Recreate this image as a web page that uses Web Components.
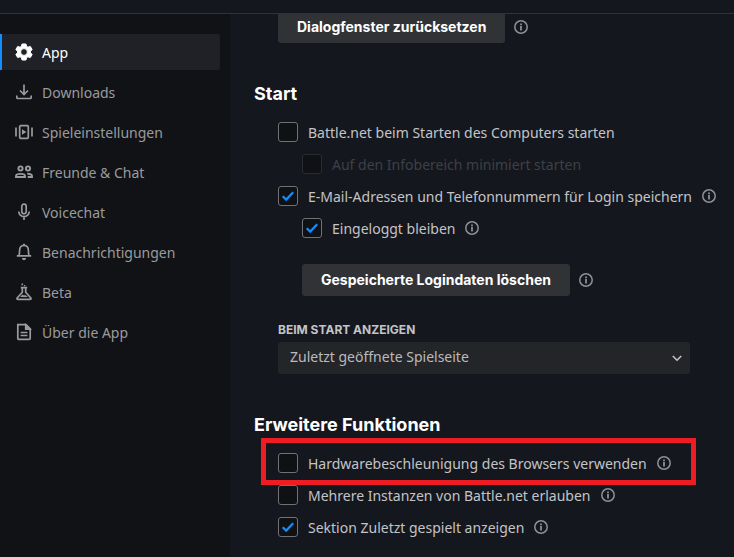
<!DOCTYPE html>
<html lang="de">
<head>
<meta charset="utf-8">
<meta name="viewport" content="width=device-width, initial-scale=1">
<title>Einstellungen</title>
<style>
body {
  margin: 0;
  background: #15171e;
  color: #c3c4c6;
  font: 14px/20px "Noto Sans", "Liberation Sans", sans-serif;
}
</style>
</head>
<body>

<settings-window>
  <nav-item slot="nav" icon="gear" active>App</nav-item>
  <nav-item slot="nav" icon="download">Downloads</nav-item>
  <nav-item slot="nav" icon="game">Spieleinstellungen</nav-item>
  <nav-item slot="nav" icon="friends">Freunde &amp; Chat</nav-item>
  <nav-item slot="nav" icon="mic">Voicechat</nav-item>
  <nav-item slot="nav" icon="bell">Benachrichtigungen</nav-item>
  <nav-item slot="nav" icon="flask">Beta</nav-item>
  <nav-item slot="nav" icon="doc">Über die App</nav-item>

  <action-row info>Dialogfenster zurücksetzen</action-row>

  <settings-section heading="Start">
    <check-row>Battle.net beim Starten des Computers starten</check-row>
    <check-row nested disabled>Auf den Infobereich minimiert starten</check-row>
    <check-row checked info>E-Mail-Adressen und Telefonnummern für Login speichern</check-row>
    <check-row nested checked info>Eingeloggt bleiben</check-row>
    <action-row nested info>Gespeicherte Logindaten löschen</action-row>
    <select-field label="Beim Start anzeigen" options="Zuletzt geöffnete Spielseite"></select-field>
  </settings-section>

  <settings-section heading="Erweitere Funktionen">
    <check-row info marked>Hardwarebeschleunigung des Browsers verwenden</check-row>
    <check-row info>Mehrere Instanzen von Battle.net erlauben</check-row>
    <check-row checked info>Sektion Zuletzt gespielt anzeigen</check-row>
  </settings-section>
</settings-window>

<script>
// every icon is drawn on an 18x18 grid
const ICONS = {
  gear: `<path fill="currentColor" fill-rule="evenodd" stroke="currentColor" stroke-width="1" stroke-linejoin="round" d="M7 1h4l.5 2.300 1.500.9 2.300-.8 1.900 3.200L15.500 8.200v1.600l1.700 1.600-1.900 3.200-2.300-.8-1.500.9L11 17H7l-.5-2.300-1.500-.9-2.300.8-1.900-3.200 1.700-1.600V8.200L.8 6.600l1.900-3.200 2.300.8 1.500-.9zM9 5.600a3.400 3.400 0 1 0 0 6.800 3.400 3.400 0 0 0 0-6.800z"/>`,
  download: `<path d="M9 1.500v9.500M5 7.500l4 4 4-4M1.800 12.500v2q0 1 1 1h12.400q1 0 1-1v-2"/>`,
  game: `<rect x="4.700" y="2.700" width="8.600" height="12.600" rx="1"/><path d="M1 4.500v9M17 4.500v9"/><path fill="currentColor" stroke="none" d="M7 6.300v5.400L11.300 9z"/>`,
  friends: `<g stroke-width="1.900"><circle cx="5.500" cy="5.500" r="2.100"/><circle cx="13" cy="5.500" r="2.100"/><path d="M1 14v-.9q0-2.200 4.500-2.200T10 13.100V14zM12.300 10.800q4.700-.1 4.700 2.300v.9h-4.300"/></g>`,
  mic: `<rect x="6.800" y="1.200" width="4.400" height="9.600" rx="2.200"/><path d="M3.800 8.500a5.200 5.200 0 0 0 10.400 0M9 13.700V17"/>`,
  bell: `<path d="M3.700 12.700c.8-1 .9-2.500 .9-5.200 0-3 1.700-5 4.400-5s4.400 2 4.400 5c0 2.700.1 4.200.9 5.200M1.800 12.900h14.400"/><path fill="currentColor" stroke="none" d="M8 .8h2v1.700H8zM6.800 15h4.400q-.5 2.200-2.200 2.200T6.800 15z"/>`,
  flask: `<path d="M5.800 4.700h6.400M7.300 5v4.300L2.200 15q-.9 1.300.6 1.300h12.400q1.500 0 .6-1.300l-5.100-5.700V5"/><path fill="currentColor" stroke="none" d="M5.200 13.900 7.500 11.500l1.500 1 1.300-.6 2.500 2zM6.500 .6h1.600v1.600H6.500zM9 2h1.300v1.300H9z"/>`,
  doc: `<path d="M2.800 1.700h8.200l4.200 4.200v9.400q0 1-1 1H3.800q-1 0-1-1zM5.600 9.500h6.800M5.600 12.500h6.800"/><path fill="currentColor" d="M10.700 1.900v4.300h4.300z"/>`,
  info: `<circle cx="9" cy="9" r="7"/><path fill="currentColor" stroke="none" d="M8 5h2v2H8zM8 8h2v5H8z"/>`
};

const svg = (name, size) =>
  `<svg viewBox="0 0 18 18" width="${size}" height="${size}" fill="none" stroke="currentColor" stroke-width="1.7" aria-hidden="true">${ICONS[name]}</svg>`;

const infoButton = `<button class="info" type="button" aria-label="Info">${svg("info", 16)}</button>`;

const infoStyle = `
.info {
  all: unset;
  display: flex;
  flex: none;
  color: #8f9093;
  cursor: pointer;
}`;

class SettingsWindow extends HTMLElement {
  constructor() {
    super();
    this.attachShadow({ mode: "open" }).innerHTML = `
<style>
:host {
  display: flex;
  flex-direction: column;
  height: 100vh;
}
header {
  flex: none;
  height: 13px;
  border-bottom: 1px solid #313236;
}
.body {
  display: flex;
  flex: 1;
  min-height: 0;
}
nav {
  display: flex;
  flex-direction: column;
  gap: 4px;
  flex: none;
  box-sizing: border-box;
  width: 230px;
  padding: 20px 10px 0 0;
  background: #111216;
}
main {
  flex: 1;
  min-width: 0;
  padding-left: 24px;
  overflow: hidden;
}
/* the list is scrolled, its first row goes under the header */
.list {
  margin-top: -3px;
}
</style>
<header></header>
<div class="body">
  <nav><slot name="nav"></slot></nav>
  <main><div class="list"><slot></slot></div></main>
</div>`;
  }
}

class NavItem extends HTMLElement {
  connectedCallback() {
    this.attachShadow({ mode: "open" }).innerHTML = `
<style>
:host {
  display: block;
  color: #9a9b9d;
}
a {
  display: flex;
  align-items: center;
  gap: 9px;
  height: 36px;
  padding-left: 13px;
  border-left: 2px solid transparent;
  border-radius: 0 2px 2px 0;
  color: inherit;
  text-decoration: none;
}
:host([active]) {
  color: #fff;
}
:host([active]) a {
  background: #202126;
  border-color: #148eff;
}
span {
  padding-top: 1px;
}
</style>
<a href="#">${svg(this.getAttribute("icon"), 18)}<span><slot></slot></span></a>`;
  }
}

class SettingsSection extends HTMLElement {
  connectedCallback() {
    this.attachShadow({ mode: "open" }).innerHTML = `
<style>
:host {
  display: block;
  margin-top: 39px;
}
h2 {
  margin: 0 0 10px;
  color: #fff;
  font: 700 18px/24px Inter, sans-serif;
}
</style>
<h2>${this.getAttribute("heading")}</h2>
<slot></slot>`;
  }
}

class CheckRow extends HTMLElement {
  connectedCallback() {
    const has = (name) => this.hasAttribute(name);
    this.attachShadow({ mode: "open" }).innerHTML = `
<style>
:host {
  display: flex;
  padding-left: 24px;
}
:host([nested]) {
  padding-left: 48px;
}
:host([disabled]) {
  color: #3e4045;
}
.row {
  position: relative;
  display: flex;
  align-items: center;
  gap: 9px;
  height: 32px;
  white-space: nowrap;
}
label {
  display: flex;
  align-items: center;
  gap: 10px;
}
input {
  appearance: none;
  flex: none;
  box-sizing: border-box;
  width: 20px;
  height: 20px;
  margin: 0;
  border: 1px solid #717276;
  border-radius: 3px;
  background: #101115;
}
input:disabled {
  border-color: #2b2c31;
}
.box {
  display: grid;
}
.box > * {
  grid-area: 1 / 1;
}
.tick {
  display: none;
  pointer-events: none;
}
input:checked + .tick {
  display: block;
}
.text {
  padding-top: 2px;
}
/* highlight frame over the row */
:host([marked]) .row::after {
  content: "";
  position: absolute;
  inset: -9px -24px -6px -17px;
  border: 5px solid #ee1c23;
  pointer-events: none;
}
${infoStyle}
</style>
<div class="row">
  <label>
    <span class="box">
      <input type="checkbox" ${has("checked") ? "checked" : ""} ${has("disabled") ? "disabled" : ""}>
      <svg class="tick" viewBox="0 0 20 20" width="20" height="20" fill="none" stroke="#148eff" stroke-width="2.200"><path d="M4.700 10.200l3.500 3.400 7-7.400"/></svg>
    </span>
    <span class="text"><slot></slot></span>
  </label>
  ${has("info") ? infoButton : ""}
</div>`;
  }
}

class ActionRow extends HTMLElement {
  connectedCallback() {
    this.attachShadow({ mode: "open" }).innerHTML = `
<style>
:host {
  display: flex;
  align-items: center;
  gap: 8px;
  padding-left: 24px;
}
:host([nested]) {
  margin-top: 20px;
  padding-left: 48px;
}
.action {
  height: 32px;
  padding: 0 19px;
  border: 0;
  border-radius: 3px;
  background: #313236;
  color: #fff;
  font: 700 14px/20px Inter, sans-serif;
  white-space: nowrap;
}
${infoStyle}
</style>
<button class="action" type="button"><slot></slot></button>
${this.hasAttribute("info") ? infoButton : ""}`;
  }
}

class SelectField extends HTMLElement {
  connectedCallback() {
    const options = this.getAttribute("options").split("|");
    this.attachShadow({ mode: "open" }).innerHTML = `
<style>
:host {
  display: block;
  margin: 26px 44px 0 24px;
}
label {
  display: block;
  margin-bottom: 4px;
  font: 700 12px/16px Inter, sans-serif;
  text-transform: uppercase;
}
.field {
  display: grid;
  align-items: center;
}
.field > * {
  grid-area: 1 / 1;
}
select {
  appearance: none;
  width: 100%;
  height: 32px;
  padding: 0 32px 2px 12px;
  border: 0;
  border-radius: 3px;
  background: #242529;
  color: #b9babc;
  font: inherit;
}
svg {
  justify-self: end;
  margin-right: 8px;
  pointer-events: none;
}
</style>
<label for="choice">${this.getAttribute("label")}</label>
<div class="field">
  <select id="choice">${options.map((o) => `<option>${o}</option>`).join("")}</select>
  <svg viewBox="0 0 10 10" width="10" height="10" fill="none" stroke="#c3c4c6" stroke-width="1.600"><path d="M.8 3l4.200 4.200L9.200 3"/></svg>
</div>`;
  }
}

customElements.define("settings-window", SettingsWindow);
customElements.define("nav-item", NavItem);
customElements.define("settings-section", SettingsSection);
customElements.define("check-row", CheckRow);
customElements.define("action-row", ActionRow);
customElements.define("select-field", SelectField);
</script>
</body>
</html>
